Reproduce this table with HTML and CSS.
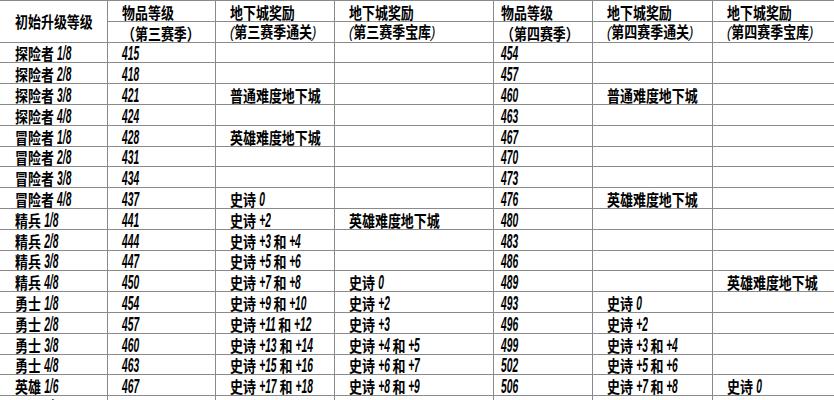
FILE: index.html
```html
<!DOCTYPE html>
<html lang="zh">
<head>
<meta charset="utf-8">
<link rel="stylesheet" href="styles.css">
</head>
<body>
<table class="grid">
<colgroup>
<col class="c1"><col class="c2"><col class="c3"><col class="c4"><col class="c5"><col class="c6"><col class="c7">
</colgroup>
<thead>
<tr>
<th rowspan="2" class="first"><span class="t">初始升级等级</span></th>
<th><span class="t">物品等级</span></th><th><span class="t">地下城奖励</span></th><th><span class="t">地下城奖励</span></th><th class="p5"><span class="t">物品等级</span></th><th><span class="t">地下城奖励</span></th><th><span class="t">地下城奖励</span></th>
</tr>
<tr>
<th><span class="t">（第三赛季）</span></th><th><span class="t"><i class="p">(</i>第三赛季通关<i class="p">)</i></span></th><th><span class="t"><i class="p">(</i>第三赛季宝库<i class="p">)</i></span></th><th class="p5"><span class="t">（第四赛季）</span></th><th><span class="t"><i class="p">(</i>第四赛季通关<i class="p">)</i></span></th><th><span class="t"><i class="p">(</i>第四赛季宝库<i class="p">)</i></span></th>
</tr>
</thead>
<tbody>
<tr><td class="first"><span class="t">探险者 <i class="f">1/8</i></span></td><td><span class="t"><i class="n3">415</i></span></td><td></td><td></td><td class="p5"><span class="t"><i class="n3">454</i></span></td><td></td><td></td></tr>
<tr><td class="first"><span class="t">探险者 <i class="f">2/8</i></span></td><td><span class="t"><i class="n3">418</i></span></td><td></td><td></td><td class="p5"><span class="t"><i class="n3">457</i></span></td><td></td><td></td></tr>
<tr><td class="first"><span class="t">探险者 <i class="f">3/8</i></span></td><td><span class="t"><i class="n3">421</i></span></td><td><span class="t">普通难度地下城</span></td><td></td><td class="p5"><span class="t"><i class="n3">460</i></span></td><td><span class="t">普通难度地下城</span></td><td></td></tr>
<tr><td class="first"><span class="t">探险者 <i class="f">4/8</i></span></td><td><span class="t"><i class="n3">424</i></span></td><td></td><td></td><td class="p5"><span class="t"><i class="n3">463</i></span></td><td></td><td></td></tr>
<tr><td class="first"><span class="t">冒险者 <i class="f">1/8</i></span></td><td><span class="t"><i class="n3">428</i></span></td><td><span class="t">英雄难度地下城</span></td><td></td><td class="p5"><span class="t"><i class="n3">467</i></span></td><td></td><td></td></tr>
<tr><td class="first"><span class="t">冒险者 <i class="f">2/8</i></span></td><td><span class="t"><i class="n3">431</i></span></td><td></td><td></td><td class="p5"><span class="t"><i class="n3">470</i></span></td><td></td><td></td></tr>
<tr><td class="first"><span class="t">冒险者 <i class="f">3/8</i></span></td><td><span class="t"><i class="n3">434</i></span></td><td></td><td></td><td class="p5"><span class="t"><i class="n3">473</i></span></td><td></td><td></td></tr>
<tr><td class="first"><span class="t">冒险者 <i class="f">4/8</i></span></td><td><span class="t"><i class="n3">437</i></span></td><td><span class="t">史诗 <i class="n1">0</i></span></td><td></td><td class="p5"><span class="t"><i class="n3">476</i></span></td><td><span class="t">英雄难度地下城</span></td><td></td></tr>
<tr><td class="first"><span class="t">精兵 <i class="f">1/8</i></span></td><td><span class="t"><i class="n3">441</i></span></td><td><span class="t">史诗 <i class="n2">+2</i></span></td><td><span class="t">英雄难度地下城</span></td><td class="p5"><span class="t"><i class="n3">480</i></span></td><td></td><td></td></tr>
<tr><td class="first"><span class="t">精兵 <i class="f">2/8</i></span></td><td><span class="t"><i class="n3">444</i></span></td><td><span class="t">史诗 <i class="n2">+3</i> 和 <i class="n2">+4</i></span></td><td></td><td class="p5"><span class="t"><i class="n3">483</i></span></td><td></td><td></td></tr>
<tr><td class="first"><span class="t">精兵 <i class="f">3/8</i></span></td><td><span class="t"><i class="n3">447</i></span></td><td><span class="t">史诗 <i class="n2">+5</i> 和 <i class="n2">+6</i></span></td><td></td><td class="p5"><span class="t"><i class="n3">486</i></span></td><td></td><td></td></tr>
<tr><td class="first"><span class="t">精兵 <i class="f">4/8</i></span></td><td><span class="t"><i class="n3">450</i></span></td><td><span class="t">史诗 <i class="n2">+7</i> 和 <i class="n2">+8</i></span></td><td><span class="t">史诗 <i class="n1">0</i></span></td><td class="p5"><span class="t"><i class="n3">489</i></span></td><td></td><td><span class="t">英雄难度地下城</span></td></tr>
<tr><td class="first"><span class="t">勇士 <i class="f">1/8</i></span></td><td><span class="t"><i class="n3">454</i></span></td><td><span class="t">史诗 <i class="n2">+9</i> 和 <i class="n3">+10</i></span></td><td><span class="t">史诗 <i class="n2">+2</i></span></td><td class="p5"><span class="t"><i class="n3">493</i></span></td><td><span class="t">史诗 <i class="n1">0</i></span></td><td></td></tr>
<tr><td class="first"><span class="t">勇士 <i class="f">2/8</i></span></td><td><span class="t"><i class="n3">457</i></span></td><td><span class="t">史诗 <i class="n3">+11</i> 和 <i class="n3">+12</i></span></td><td><span class="t">史诗 <i class="n2">+3</i></span></td><td class="p5"><span class="t"><i class="n3">496</i></span></td><td><span class="t">史诗 <i class="n2">+2</i></span></td><td></td></tr>
<tr><td class="first"><span class="t">勇士 <i class="f">3/8</i></span></td><td><span class="t"><i class="n3">460</i></span></td><td><span class="t">史诗 <i class="n3">+13</i> 和 <i class="n3">+14</i></span></td><td><span class="t">史诗 <i class="n2">+4</i> 和 <i class="n2">+5</i></span></td><td class="p5"><span class="t"><i class="n3">499</i></span></td><td><span class="t">史诗 <i class="n2">+3</i> 和 <i class="n2">+4</i></span></td><td></td></tr>
<tr><td class="first"><span class="t">勇士 <i class="f">4/8</i></span></td><td><span class="t"><i class="n3">463</i></span></td><td><span class="t">史诗 <i class="n3">+15</i> 和 <i class="n3">+16</i></span></td><td><span class="t">史诗 <i class="n2">+6</i> 和 <i class="n2">+7</i></span></td><td class="p5"><span class="t"><i class="n3">502</i></span></td><td><span class="t">史诗 <i class="n2">+5</i> 和 <i class="n2">+6</i></span></td><td></td></tr>
<tr><td class="first"><span class="t">英雄 <i class="f">1/6</i></span></td><td><span class="t"><i class="n3">467</i></span></td><td><span class="t">史诗 <i class="n3">+17</i> 和 <i class="n3">+18</i></span></td><td><span class="t">史诗 <i class="n2">+8</i> 和 <i class="n2">+9</i></span></td><td class="p5"><span class="t"><i class="n3">506</i></span></td><td><span class="t">史诗 <i class="n2">+7</i> 和 <i class="n2">+8</i></span></td><td><span class="t">史诗 <i class="n1">0</i></span></td></tr>
<tr><td class="first"><span class="t">英雄 <i class="f">2/6</i></span></td><td><span class="t"><i class="n3">470</i></span></td><td><span class="t">史诗 <i class="n3">+19</i> 和 <i class="n3">+20</i></span></td><td><span class="t">史诗 <i class="n3">+10</i> 和 <i class="n3">+11</i></span></td><td class="p5"><span class="t"><i class="n3">509</i></span></td><td><span class="t">史诗 <i class="n2">+9</i> 和 <i class="n3">+10</i></span></td><td><span class="t">史诗 <i class="n2">+2</i> 和 <i class="n2">+3</i></span></td></tr>
</tbody>
</table>
</body>
</html>
```

FILE: styles.css
```css
html, body {
  margin: 0;
  padding: 0;
  background: #ffffff;
  overflow: hidden;
}

.grid {
  border-collapse: collapse;
  table-layout: fixed;
  width: 834px;
  font-family: "Noto Sans CJK SC", sans-serif;
  font-size: 16px;
  font-weight: 700;
  color: #000;
}

.c1 { width: 107px; }
.c2 { width: 108px; }
.c3 { width: 119px; }
.c4 { width: 159px; }
.c5 { width: 99px; }
.c6 { width: 120px; }
.c7 { width: 122px; }

.grid tr {
  height: 20.8px;
}

.grid th,
.grid td {
  border: 1px solid #8a8a8a;
  padding: 0 0 1px 14px;
  line-height: 16px;
  text-align: left;
  white-space: nowrap;
  font-weight: 700;
  vertical-align: bottom;
}

.grid .first {
  border-left: none;
  padding-left: 15px;
}

.grid th.first {
  vertical-align: middle;
  padding-bottom: 0;
}

.grid .p5 {
  padding-left: 7px;
}

.t {
  display: inline-block;
  line-height: 16px;
  transform: scaleX(0.81);
  transform-origin: 0 50%;
  vertical-align: top;
}

.t i {
  display: inline-block;
  font-family: "Liberation Sans", sans-serif;
  font-style: italic;
  font-weight: 700;
  font-size: 20px;
  line-height: 16px;
  transform: scaleX(0.633);
  transform-origin: 0 50%;
}

.t i.p {
  display: inline;
  font-weight: 400;
  font-size: 16px;
  transform: none;
}

.t i.n1 { margin-right: -0.37ch; }
.t i.n2 { margin-right: -0.75ch; }
.t i.n3 { margin-right: -1.1ch; }
.t i.f  { margin-right: -0.92ch; }
```
